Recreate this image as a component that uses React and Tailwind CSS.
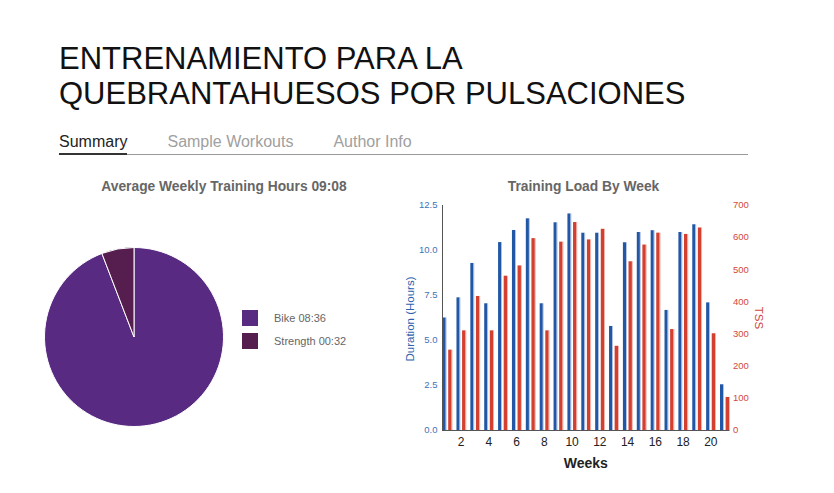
import React from 'react';

const FONT = '"Liberation Sans", Arial, sans-serif';

// weekly values read off the chart
const duration = [6.25, 7.37, 9.28, 7.04, 10.44, 11.11, 11.76, 7.04, 11.54, 12.03, 10.96, 10.96, 5.78, 10.43, 11.0, 11.1, 6.67, 11.0, 11.43, 7.09, 2.54];
const tss = [250, 310, 417, 310, 480, 512, 597, 310, 586, 647, 593, 626, 262, 525, 577, 614, 314, 610, 630, 301, 103];

const X0 = 447.3;
const STEP = 13.87;
const BASE = 430;
const hourY = (v) => BASE - v * 18;
const tssY = (v) => BASE - v * (225 / 700);

const PieChart = () => {
  const r = 89.5;
  const a = (32 / 548) * Math.PI * 2;
  const ex = (-r * Math.sin(a)).toFixed(2);
  const ey = (-r * Math.cos(a)).toFixed(2);
  return (
    <svg width="182" height="182" viewBox="-91 -91 182 182" className="ml-[13px] mt-[42px] shrink-0">
      <path d={`M0 0 L0 ${-r} A${r} ${r} 0 1 1 ${ex} ${ey} Z`} fill="#582a82" stroke="#fff" strokeWidth="1" />
      <path d={`M0 0 L${ex} ${ey} A${r} ${r} 0 0 1 0 ${-r} Z`} fill="#561d4f" stroke="#fff" strokeWidth="1" />
    </svg>
  );
};

const LoadChart = () => {
  const hourTicks = [0, 2.5, 5, 7.5, 10, 12.5];
  const tssTicks = [0, 100, 200, 300, 400, 500, 600, 700];
  return (
    <svg width="331" height="276" viewBox="418 204 331 276" overflow="visible" fontFamily={FONT}>
      {/* bars */}
      {duration.map((d, i) => {
        const c = X0 + i * STEP;
        return (
          <g key={i}>
            <rect x={c - 4.7} y={hourY(d)} width="3.1" height={BASE - hourY(d)} fill="#2157a5" />
            <rect x={c - 1.6} y={hourY(d)} width="0.8" height={BASE - hourY(d)} fill="#a3b8dc" />
            <rect x={c + 0.9} y={tssY(tss[i])} width="3.4" height={BASE - tssY(tss[i])} fill="#d4402f" />
            <rect x={c + 4.3} y={tssY(tss[i])} width="0.8" height={BASE - tssY(tss[i])} fill="#eba79f" />
          </g>
        );
      })}

      {/* axes */}
      <line x1="442.5" y1="205" x2="442.5" y2="430.5" stroke="#555" strokeWidth="1" />
      <line x1="442" y1="430.5" x2="729.5" y2="430.5" stroke="#555" strokeWidth="1" />

      {hourTicks.map((t) => (
        <text key={t} x="437.5" y={hourY(t)} dy="0.35em" textAnchor="end" fontSize="9.5" fill="#4173b9">
          {t.toFixed(1)}
        </text>
      ))}
      {tssTicks.map((t) => (
        <text key={t} x="733" y={tssY(t)} dy="0.35em" fontSize="9.5" fill="#d5473b">
          {t}
        </text>
      ))}

      {[2, 4, 6, 8, 10, 12, 14, 16, 18, 20].map((w) => (
        <text key={w} x={X0 + (w - 1) * STEP} y="442" dy="0.35em" textAnchor="middle" fontSize="12" fill="#222">
          {w}
        </text>
      ))}

      <text x="410" y="319" dy="0.35em" textAnchor="middle" fontSize="11.5" fill="#2e62ad" transform="rotate(-90 410 319)">
        Duration (Hours)
      </text>
      <text x="759" y="318" dy="0.35em" textAnchor="middle" fontSize="11.5" fill="#d0453a" transform="rotate(90 759 318)">
        TSS
      </text>
      <text x="585.8" y="467.7" textAnchor="middle" fontSize="14" fontWeight="bold" fill="#222">
        Weeks
      </text>
    </svg>
  );
};

const App = () => {
  return (
    <div className="min-h-screen bg-white font-['Liberation_Sans',Arial,sans-serif]">
      {/* Header */}
      <div className="w-[748px] pl-[59px] pt-[41px]">
        <h1 className="text-[31px] leading-[35px] font-normal text-[#111]">
          ENTRENAMIENTO PARA LA QUEBRANTAHUESOS POR PULSACIONES
        </h1>
        <ul className="mt-[21px] flex border-b border-[#9a9a9a] text-[16px] leading-[20px]">
          <li className="-mb-px mr-[40px] border-b-2 border-[#333] pb-[1px] text-[#222]">Summary</li>
          <li className="-mb-px mr-[40px] border-b-2 border-transparent pb-[1px] text-[#a0a0a0]">Sample Workouts</li>
          <li className="-mb-px mr-[40px] border-b-2 border-transparent pb-[1px] text-[#a0a0a0]">Author Info</li>
        </ul>
      </div>

      {/* Charts */}
      <div className="mt-[15px] flex pl-[30px]">
        <div className="w-[388px]">
          <h2 className="h-[34px] text-center text-[13.8px] leading-[34px] font-bold text-[#666]">
            Average Weekly Training Hours 09:08
          </h2>
          <div className="flex items-start">
            <PieChart />
            <div className="ml-[17px] mt-[106px] text-[11px] text-[#666]">
              <div className="mb-[6px] flex items-center">
                <span className="h-4 w-4 bg-[#582a82]" />
                <span className="ml-4">Bike 08:36</span>
              </div>
              <div className="flex items-center">
                <span className="h-4 w-4 bg-[#561d4f]" />
                <span className="ml-4">Strength 00:32</span>
              </div>
            </div>
          </div>
        </div>
        <div className="w-[331px]">
          <h2 className="h-[34px] text-center text-[13.8px] leading-[34px] font-bold text-[#666]">
            Training Load By Week
          </h2>
          <LoadChart />
        </div>
      </div>
    </div>
  );
};

export default App;
